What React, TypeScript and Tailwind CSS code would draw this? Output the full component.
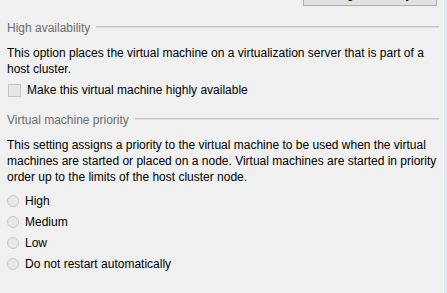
import React from "react";

const font = { fontFamily: '"Segoe UI", "Liberation Sans", Arial, sans-serif' };

function GroupHeader(props: { title: string }) {
  return (
    <div className="flex items-center h-[16px] pr-[4px]">
      <span className="text-[#6d6d6d] whitespace-nowrap">{props.title}</span>
      <div className="flex-1 ml-[6px] mt-[-2px] border-t border-t-[#c8c8c8] border-b border-b-[#dedede]" />
    </div>
  );
}

function Radio(props: { label: string }) {
  return (
    <div className="flex items-center h-[16px]">
      <span className="w-[12px] h-[12px] rounded-full border border-[#c6c6c6] bg-[#e8e8e8] shrink-0" />
      <span className="ml-[6px] text-black">{props.label}</span>
    </div>
  );
}

export default function App() {
  const priorities = ["High", "Medium", "Low", "Do not restart automatically"];

  return (
    <div
      className="flex w-[447px] h-[293px] overflow-hidden bg-[#f0f0f0] text-[12px] leading-[16px]"
      style={font}
    >
      <main className="flex-1 flex flex-col pl-[7px]">
        <div className="flex justify-end pr-[6px]">
          <button className="h-[24px] w-[134px] mt-[-18px] border border-[#adadad] bg-[#e1e1e1] text-black leading-[16px] pt-[3px] flex justify-center items-start overflow-hidden">
            Configure Priority...
          </button>
        </div>

        <section className="mt-[14px]">
          <GroupHeader title="High availability" />
          <p className="mt-[9px] text-black">
            This option places the virtual machine on a virtualization server that is part of a
            <br />
            host cluster.
          </p>
          <label className="mt-[5px] flex items-center h-[16px] pl-[1px]">
            <span className="w-[13px] h-[13px] border border-[#c4c4c4] bg-[#e6e6e6] shrink-0" />
            <span className="ml-[6px] text-black">Make this virtual machine highly available</span>
          </label>
        </section>

        <section className="mt-[14px]">
          <GroupHeader title="Virtual machine priority" />
          <p className="mt-[9px] text-black">
            This setting assigns a priority to the virtual machine to be used when the virtual
            <br />
            machines are started or placed on a node. Virtual machines are started in priority
            <br />
            order up to the limits of the host cluster node.
          </p>
          <div className="mt-[8px] flex flex-col gap-[5px]">
            {priorities.map((p) => (
              <Radio key={p} label={p} />
            ))}
          </div>
        </section>
      </main>
      <div className="w-[4px] border-l border-l-[#fbfbfb] bg-[#e3e7ed]" />
    </div>
  );
}
